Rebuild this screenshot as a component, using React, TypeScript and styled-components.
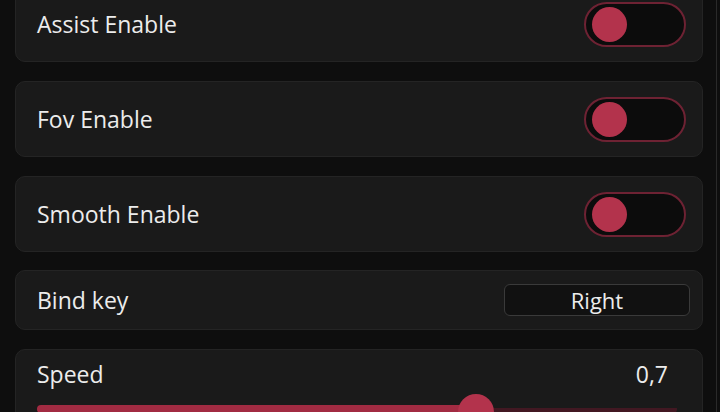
import styled, { createGlobalStyle } from 'styled-components'

const colors = {
    page: '#0e0e0e',
    card: '#1a1a1a',
    cardBorder: '#242424',
    text: '#ececec',
    accent: '#b3334c',
    accentDark: '#6e2233',
    trackRest: '#421822',
}

const GlobalStyle = createGlobalStyle`
    html, body {
        margin: 0;
        background: ${colors.page};
        font-family: 'Open Sans', 'Noto Sans', sans-serif;
        color: ${colors.text};
    }
`

function Toggle() {
    return (
        <ToggleTrack>
            <Knob />
        </ToggleTrack>
    )
}

function ToggleRow(props: { label: string }) {
    return (
        <Card>
            <Label>{props.label}</Label>
            <Toggle />
        </Card>
    )
}

export default function App() {
    const speed = 0.7
    return (
        <>
            <GlobalStyle />
            <Window>
                <Content>
                    <List>
                        <ToggleRow label='Assist Enable' />
                        <ToggleRow label='Fov Enable' />
                        <ToggleRow label='Smooth Enable' />
                        <BindCard>
                            <Label>Bind key</Label>
                            <KeyButton>Right</KeyButton>
                        </BindCard>
                        <SliderCard>
                            <SliderHead>
                                <Label>Speed</Label>
                                <Label>{speed.toString().replace('.', ',')}</Label>
                            </SliderHead>
                            <Track>
                                <Fill style={{ width: '68.6%' }} />
                                <Thumb style={{ left: '68.6%' }} />
                            </Track>
                        </SliderCard>
                    </List>
                </Content>
            </Window>
        </>
    )
}

const Window = styled('div')`
    display: flex;
    width: 720px;
    height: 412px;
    overflow: hidden;
`

const Content = styled('div')`
    flex: 1;
    border-right: 1px solid #2a2a2a;
    margin-right: 3px;
    overflow: hidden;
`

const List = styled('div')`
    display: flex;
    flex-direction: column;
    gap: 19px;
    margin-top: -14px;
    padding: 0 13px 0 15px;
`

const Card = styled('div')`
    display: flex;
    align-items: center;
    justify-content: space-between;
    height: 76px;
    box-sizing: border-box;
    padding: 0 16px 0 21px;
    background: ${colors.card};
    border: 1px solid ${colors.cardBorder};
    border-radius: 10px;
`

const BindCard = styled(Card)`
    height: 60px;
    margin-top: -1px;
    padding-right: 12px;
`

const SliderCard = styled(Card)`
    flex-direction: column;
    align-items: stretch;
    justify-content: flex-start;
    height: 90px;
    padding: 8px 25px 0 21px;
`

const Label = styled('span')`
    font-size: 23px;
`

const ToggleTrack = styled('div')`
    display: flex;
    align-items: center;
    width: 102px;
    height: 45px;
    box-sizing: border-box;
    padding-left: 6px;
    background: #0c0c0c;
    border: 2px solid ${colors.accentDark};
    border-radius: 23px;
`

const Knob = styled('div')`
    width: 35px;
    height: 35px;
    border-radius: 50%;
    background: ${colors.accent};
`

const KeyButton = styled('div')`
    display: flex;
    align-items: center;
    justify-content: center;
    width: 186px;
    height: 32px;
    box-sizing: border-box;
    background: #111111;
    border: 1px solid #3a3a3a;
    border-radius: 6px;
    font-size: 22px;
`

const SliderHead = styled('div')`
    display: flex;
    justify-content: space-between;
    align-items: center;
    padding-right: 9px;
`

const Track = styled('div')`
    position: relative;
    margin-top: 15px;
    height: 8px;
    border-radius: 4px;
    background: linear-gradient(to bottom, transparent 3px, ${colors.trackRest} 3px);
`

const Fill = styled('div')`
    height: 100%;
    border-radius: 4px;
    background: #a22b42;
`

const Thumb = styled('div')`
    position: absolute;
    top: -11px;
    width: 36px;
    height: 36px;
    margin-left: -18px;
    border-radius: 50%;
    background: ${colors.accent};
`
